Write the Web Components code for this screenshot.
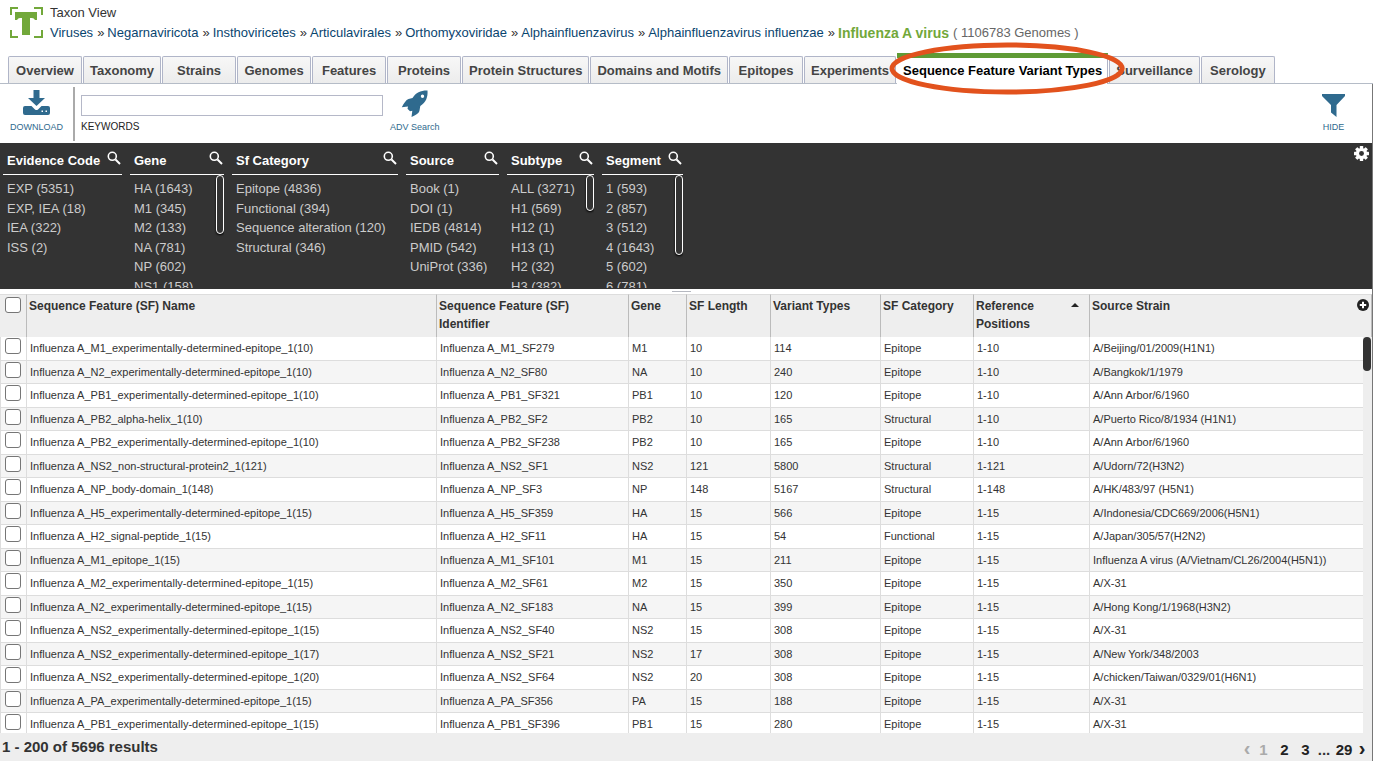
<!DOCTYPE html>
<html lang="en">
<head>
<meta charset="utf-8">
<title>Taxon View - Influenza A virus</title>
<style>
  html, body { height: 100%; }
  body { margin: 0; font-family: "Liberation Sans", Arial, sans-serif; font-size: 13px; color: #333; background: #fff; overflow: hidden; }
</style>
</head>
<body>
<taxon-app></taxon-app>

<script>
const define = (name, html, init) => {
  const tpl = document.createElement('template');
  tpl.innerHTML = html;
  customElements.define(name, class extends HTMLElement {
    connectedCallback() {
      if (this.shadowRoot) return;
      this.attachShadow({ mode: 'open' }).append(tpl.content.cloneNode(true));
      if (init) init.call(this, this.shadowRoot);
    }
  });
};

define('taxon-header', `
<style>
  :host { display: flex; gap: 7px; padding: 4px 8px 0 9px; height: 49px; box-sizing: border-box; line-height: 18px; }
  svg { flex: none; margin-top: 2px; }
  .title { color: #333; }
  nav { display: flex; margin-top: 1px; line-height: 20px; white-space: nowrap; }
  nav span { margin: 0 3px 0 4px; }
  a { color: #09456f; text-decoration: none; }
  a.current { color: #72a83a; font-weight: bold; font-size: 14px; }
  .count { color: #666; }
</style>
<svg width="34" height="34" viewBox="0 0 34 34" fill="#72a83a" aria-hidden="true">
  <path d="M1 1h8v2H3v6H1zM25 1h9v8h-2V3h-7zM1 24h2v6h6v2H1zM32 24h2v8h-9v-2h7z"/>
  <path d="M6 6h22v8h-2q-1-2-3-2h-2v17h-8V12h-2q-2 0-3 2H6z"/>
</svg>
<div>
  <div class="title">Taxon View</div>
  <nav aria-label="Taxonomy">
    <a href="#">Viruses</a><span>»</span><a href="#">Negarnaviricota</a><span>»</span><a href="#">Insthoviricetes</a><span>»</span><a href="#">Articulavirales</a><span>»</span><a href="#">Orthomyxoviridae</a><span>»</span><a href="#">Alphainfluenzavirus</a><span>»</span><a href="#">Alphainfluenzavirus influenzae</a><span>»</span><a class="current" href="#">Influenza A virus</a><span class="count">( 1106783 Genomes )</span>
  </nav>
</div>`);

define('view-tabs', `
<style>
  :host { display: flex; align-items: flex-end; gap: 1px; padding: 4px 8px 0; border-bottom: 1px solid #b5bcc7; }
</style>
<slot></slot>`);

define('view-tab', `
<style>
  :host { display: block; position: relative; }
  button { display: block; box-sizing: border-box; min-width: 74px; height: 27px; padding: 1px 6px 0; border: 1px solid #b0b5c8; border-bottom: 0; border-radius: 2px 2px 0 0;
    background: linear-gradient(#f7f7f7, #ececec); color: #444; font: bold 13px "Liberation Sans", Arial, sans-serif; white-space: nowrap; }
  :host([active]) { z-index: 2; margin-bottom: -1px; }
  :host([active]) button { height: 31px; padding: 0 5px 2px 6px; border: 0 solid #5a9a32; border-right: 1px solid #b0b5c8; border-top: 5px solid #5f9b35; border-radius: 0; background: #fff; color: #000; }
</style>
<button role="tab"><slot></slot></button>
<slot name="mark"></slot>`);

/* Hand-drawn style ring around a tab */
define('tab-ring', `
<style>
  :host { position: absolute; inset: -11px -17px -11px -8px; pointer-events: none; }
  svg { display: block; width: 100%; height: 100%; overflow: visible; }
</style>
<svg viewBox="0 0 236 53" preserveAspectRatio="none" aria-hidden="true"><ellipse cx="118" cy="26.500" rx="115" ry="23.500" fill="none" stroke="#e2521d" stroke-width="5"/></svg>`);

define('tool-button', `
<style>
  :host { display: block; }
  button { display: grid; grid-template-rows: 28px 12px; gap: 4px; justify-items: center; align-items: center; border: 0; padding: 0; background: none; color: #2f6a8e; font: 9px/12px "Liberation Sans", Arial, sans-serif; white-space: nowrap; }
</style>
<button><slot name="icon"></slot><slot></slot></button>`);

define('grid-toolbar', `
<style>
  :host { display: flex; height: 59px; box-sizing: border-box; padding: 3px 27px 0 10px; background: #fff; }
  tool-button { margin-top: 2px; }
  .rule { width: 2px; height: 54px; margin: 0 6px 0 10px; background: #aaa; }
  .kw { width: 302px; margin: 8px 7px 0 0; }
  input { display: block; box-sizing: border-box; width: 100%; height: 21px; border: 1px solid #b5b8c8; background: #fff; padding: 0 4px; outline: 0; }
  label { display: block; margin-top: 5px; font-size: 10px; line-height: 12px; color: #222; }
  .push { margin-left: auto; }
  svg { display: block; fill: currentColor; }
</style>
<tool-button>
  <svg slot="icon" width="27" height="28" viewBox="0 0 27 28"><path d="M10.500 1h6v8h5.500l-8.500 8L5 9h5.500z"/><path fill-rule="evenodd" d="M2 17h6.500l3.500 3.400q1.500 1 3 0L18.500 17H25q2 0 2 2v5q0 2-2 2H2q-2 0-2-2v-5q0-2 2-2zM18.500 21.500v1.500H20v-1.500zM22.500 21.500v1.500H24v-1.500z"/></svg>
  DOWNLOAD
</tool-button>
<div class="rule"></div>
<div class="kw"><input id="kw" type="text"><label for="kw">KEYWORDS</label></div>
<tool-button>
  <svg slot="icon" width="27" height="28" viewBox="0 -1 27 28"><path fill-rule="evenodd" d="M26.500.5C20 .3 15 2.500 11.500 8L7.500 9C5 10 3 13 .8 17.200L7 16.500l-.5 2.200 2.500 2.600 2.300-.5L10.500 27c4.500-2 7.500-3.700 8-6.500l.8-4.500C25 12.500 27 7 26.500.5zM21.500 4.500a1.700 1.700 0 1 1-.01 3.400 1.700 1.700 0 0 1 .01-3.400z"/></svg>
  ADV Search
</tool-button>
<tool-button class="push">
  <svg slot="icon" width="23" height="28" viewBox="0 -5 23 28"><path d="M0 0h23v2l-8.500 9v12L9 18.500V11L0 2z"/></svg>
  HIDE
</tool-button>`);

define('facet-list', `
<style>
  :host { display: flex; flex-direction: column; min-height: 0; overflow: hidden; position: relative; }
  header { display: flex; flex: none; justify-content: space-between; height: 31px; box-sizing: border-box; padding: 7px 1px 0 4px; border-bottom: 1px solid #fff; color: #fff; font-weight: bold; line-height: 20px; white-space: nowrap; }
  button { border: 0; padding: 0; background: none; width: 14px; height: 14px; }
  svg { display: block; }
  ul { list-style: none; margin: 0; padding: 4px 0 0 4px; color: #ccc; white-space: nowrap; }
  li { height: 20px; line-height: 20px; }
  li:nth-child(even) { height: 19px; }
  .thumb { position: absolute; right: 0; top: 31px; box-sizing: border-box; width: 8px; border: 1px solid #fff; border-radius: 4px; background: #333; box-shadow: 0 1px 2px #000; }
</style>
<header><span class="name"></span><button aria-label="Search values"><svg width="14" height="14" viewBox="0 0 14 14" fill="none" stroke="#fff"><circle cx="5.300" cy="5.300" r="4" stroke-width="1.600"/><path d="M8.500 8.500l4.500 4.500" stroke-width="2"/></svg></button></header>
<ul></ul>`, function (root) {
  root.querySelector('.name').textContent = this.getAttribute('name');
  for (const v of this.getAttribute('values').split('|')) {
    const li = document.createElement('li');
    li.textContent = v;
    root.querySelector('ul').append(li);
  }
  if (this.hasAttribute('thumb')) {
    const t = document.createElement('div');
    t.className = 'thumb';
    t.style.height = this.getAttribute('thumb') + 'px';
    root.append(t);
  }
});

define('filter-panel', `
<style>
  :host { display: grid; grid-template-columns: 119px 94px 166px 93px 87px 81px 1fr; column-gap: 8px; height: 146px; box-sizing: border-box; padding: 1px 3px 1px 3px; background: #333; overflow: hidden; }
  .gear { justify-self: end; align-self: start; border: 0; padding: 0; margin-top: 2px; background: none; }
  svg { display: block; }
</style>
<facet-list name="Evidence Code" values="EXP (5351)|EXP, IEA (18)|IEA (322)|ISS (2)"></facet-list>
<facet-list name="Gene" thumb="59" values="HA (1643)|M1 (345)|M2 (133)|NA (781)|NP (602)|NS1 (158)"></facet-list>
<facet-list name="Sf Category" values="Epitope (4836)|Functional (394)|Sequence alteration (120)|Structural (346)"></facet-list>
<facet-list name="Source" values="Book (1)|DOI (1)|IEDB (4814)|PMID (542)|UniProt (336)"></facet-list>
<facet-list name="Subtype" thumb="36" values="ALL (3271)|H1 (569)|H12 (1)|H13 (1)|H2 (32)|H3 (382)"></facet-list>
<facet-list name="Segment" thumb="80" values="1 (593)|2 (857)|3 (512)|4 (1643)|5 (602)|6 (781)"></facet-list>
<button class="gear" aria-label="Filter settings"><svg width="15" height="15" viewBox="0 0 16 16"><g fill="#fff"><circle cx="8" cy="8" r="6"/><rect x="6.200" y="0" width="3.600" height="16" rx=".6"/><rect x="0" y="6.200" width="16" height="3.600" rx=".6"/><g transform="rotate(45 8 8)"><rect x="6.200" y="0" width="3.600" height="16" rx=".6"/><rect x="0" y="6.200" width="16" height="3.600" rx=".6"/></g></g><circle cx="8" cy="8" r="2.600" fill="#333"/></svg></button>`);

const E = 'experimentally-determined-epitope';
const ROWS = [
  ['M1_' + E + '_1(10)', 'M1_SF279', 'M1', 10, 114, 'Epitope', '1-10', 'A/Beijing/01/2009(H1N1)'],
  ['N2_' + E + '_1(10)', 'N2_SF80', 'NA', 10, 240, 'Epitope', '1-10', 'A/Bangkok/1/1979'],
  ['PB1_' + E + '_1(10)', 'PB1_SF321', 'PB1', 10, 120, 'Epitope', '1-10', 'A/Ann Arbor/6/1960'],
  ['PB2_alpha-helix_1(10)', 'PB2_SF2', 'PB2', 10, 165, 'Structural', '1-10', 'A/Puerto Rico/8/1934 (H1N1)'],
  ['PB2_' + E + '_1(10)', 'PB2_SF238', 'PB2', 10, 165, 'Epitope', '1-10', 'A/Ann Arbor/6/1960'],
  ['NS2_non-structural-protein2_1(121)', 'NS2_SF1', 'NS2', 121, 5800, 'Structural', '1-121', 'A/Udorn/72(H3N2)'],
  ['NP_body-domain_1(148)', 'NP_SF3', 'NP', 148, 5167, 'Structural', '1-148', 'A/HK/483/97 (H5N1)'],
  ['H5_' + E + '_1(15)', 'H5_SF359', 'HA', 15, 566, 'Epitope', '1-15', 'A/Indonesia/CDC669/2006(H5N1)'],
  ['H2_signal-peptide_1(15)', 'H2_SF11', 'HA', 15, 54, 'Functional', '1-15', 'A/Japan/305/57(H2N2)'],
  ['M1_epitope_1(15)', 'M1_SF101', 'M1', 15, 211, 'Epitope', '1-15', 'Influenza A virus (A/Vietnam/CL26/2004(H5N1))'],
  ['M2_' + E + '_1(15)', 'M2_SF61', 'M2', 15, 350, 'Epitope', '1-15', 'A/X-31'],
  ['N2_' + E + '_1(15)', 'N2_SF183', 'NA', 15, 399, 'Epitope', '1-15', 'A/Hong Kong/1/1968(H3N2)'],
  ['NS2_' + E + '_1(15)', 'NS2_SF40', 'NS2', 15, 308, 'Epitope', '1-15', 'A/X-31'],
  ['NS2_' + E + '_1(17)', 'NS2_SF21', 'NS2', 17, 308, 'Epitope', '1-15', 'A/New York/348/2003'],
  ['NS2_' + E + '_1(20)', 'NS2_SF64', 'NS2', 20, 308, 'Epitope', '1-15', 'A/chicken/Taiwan/0329/01(H6N1)'],
  ['PA_' + E + '_1(15)', 'PA_SF356', 'PA', 15, 188, 'Epitope', '1-15', 'A/X-31'],
  ['PB1_' + E + '_1(15)', 'PB1_SF396', 'PB1', 15, 280, 'Epitope', '1-15', 'A/X-31']
];

define('feature-grid', `
<style>
  :host { display: block; position: relative; flex: 1; min-height: 0; overflow: hidden; background: #eee; }
  table { width: 100%; border-collapse: separate; border-spacing: 0; table-layout: fixed; }
  th, td { box-sizing: border-box; text-align: left; overflow: hidden; white-space: nowrap; }
  th { height: 43px; padding: 2px 2px 0; vertical-align: top; font: bold 12px/18px "Liberation Sans", Arial, sans-serif; color: #333; white-space: normal; background: #eee; border-top: 1px solid #ddd; border-right: 1px solid #bbb; }
  td { height: 24px; padding: 0 3px; vertical-align: top; font-size: 11px; line-height: 22px; color: #333; background: #fff; border-right: 1px solid #ddd; border-bottom: 1px solid #ddd; }
  tr:nth-child(even) td { height: 23px; background: #f5f5f5; }
  td.sel, th.sel { padding: 1px 0 0 5px; line-height: 0; }
  td.sel { padding-left: 4px; border-left: 1px solid #ddd; }
  th.sel { padding-top: 2px; }
  td.bar, tr:nth-child(even) td.bar { padding: 0; background: #eee; border: 0; }
  td:nth-last-child(2) { border-right: 0; }
  th:nth-last-child(2) { border-right: 0; }
  th:last-child { padding: 4px 0 0; overflow: visible; }
  input { appearance: none; box-sizing: border-box; display: block; width: 16px; height: 16px; margin: 0; border: 1px solid #767676; border-radius: 3px; background: #fff; }
  .sort { display: flex; justify-content: space-between; padding-right: 8px; }
  .sort i { width: 0; height: 0; margin-top: 6px; border: 4px solid transparent; border-top: 0; border-bottom: 4px solid #222; }
  button { display: block; border: 0; padding: 0; margin-left: -6px; background: none; }
  svg { display: block; }
  .thumb { position: absolute; right: 1px; top: 43px; width: 8px; height: 34px; border-radius: 4px; background: #333; }
</style>
<table>
  <colgroup><col style="width:27px"><col style="width:410px"><col style="width:192px"><col style="width:58px"><col style="width:84px"><col style="width:110px"><col style="width:93px"><col style="width:116px"><col><col style="width:9px"></colgroup>
  <thead><tr>
    <th class="sel"><input type="checkbox" aria-label="Select all"></th>
    <th>Sequence Feature (SF) Name</th><th>Sequence Feature (SF)<br>Identifier</th><th>Gene</th><th>SF Length</th><th>Variant Types</th><th>SF Category</th>
    <th aria-sort="ascending"><div class="sort"><span>Reference Positions</span><i></i></div></th><th>Source Strain</th>
    <th><button aria-label="Choose columns"><svg width="12" height="12" viewBox="0 0 12 12"><circle cx="6" cy="6" r="6" fill="#222"/><path d="M6 2.800v6.400M2.800 6h6.400" stroke="#fff" stroke-width="2"/></svg></button></th>
  </tr></thead>
  <tbody></tbody>
</table>
<div class="thumb"></div>`, function (root) {
  const body = root.querySelector('tbody');
  for (const r of ROWS) {
    const tr = body.insertRow();
    const sel = tr.insertCell();
    sel.className = 'sel';
    const box = document.createElement('input');
    box.type = 'checkbox';
    box.setAttribute('aria-label', 'Select row');
    sel.append(box);
    r.forEach((v, i) => { tr.insertCell().textContent = i < 2 ? 'Influenza A_' + v : v; });
    tr.insertCell().className = 'bar';
  }
});

define('page-footer', `
<style>
  :host { display: flex; justify-content: space-between; height: 28px; padding: 0 4px 0 2px; background: #eee; font-weight: bold; font-size: 15px; line-height: 28px; color: #333; white-space: nowrap; }
  nav { display: flex; margin-top: 3px; }
  a { color: #222; text-decoration: none; }
  a.off { color: #aaa; }
  .num { width: 21px; text-align: center; }
  .dots { width: 16px; text-align: center; }
  .last { width: 24px; text-align: center; }
  .chev { width: 12px; text-align: center; font-size: 20px; line-height: 24px; }
</style>
<span>1 - 200 of 5696 results</span>
<nav aria-label="Pages"><a class="chev off" href="#">‹</a><a class="num off" href="#">1</a><a class="num" href="#">2</a><a class="num" href="#">3</a><span class="dots">...</span><a class="last" href="#">29</a><a class="chev" href="#">›</a></nav>`);

define('taxon-app', `
<style>
  :host { display: flex; flex-direction: column; height: 100vh; }
  main { display: flex; flex-direction: column; flex: 1; min-height: 0; border-right: 1px solid #777; }
  .split { display: flex; justify-content: center; align-items: center; height: 5px; padding-right: 9px; background: #fff; }
  .split i { width: 19px; height: 1px; background: #b5b8c0; }
</style>
<taxon-header></taxon-header>
<view-tabs role="tablist">
  <view-tab>Overview</view-tab><view-tab>Taxonomy</view-tab><view-tab>Strains</view-tab><view-tab>Genomes</view-tab><view-tab>Features</view-tab><view-tab>Proteins</view-tab><view-tab>Protein Structures</view-tab><view-tab>Domains and Motifs</view-tab><view-tab>Epitopes</view-tab><view-tab>Experiments</view-tab><view-tab active>Sequence Feature Variant Types<tab-ring slot="mark"></tab-ring></view-tab><view-tab>Surveillance</view-tab><view-tab>Serology</view-tab>
</view-tabs>
<main>
  <grid-toolbar></grid-toolbar>
  <filter-panel></filter-panel>
  <div class="split"><i></i></div>
  <feature-grid></feature-grid>
  <page-footer></page-footer>
</main>`);
</script>
</body>
</html>
